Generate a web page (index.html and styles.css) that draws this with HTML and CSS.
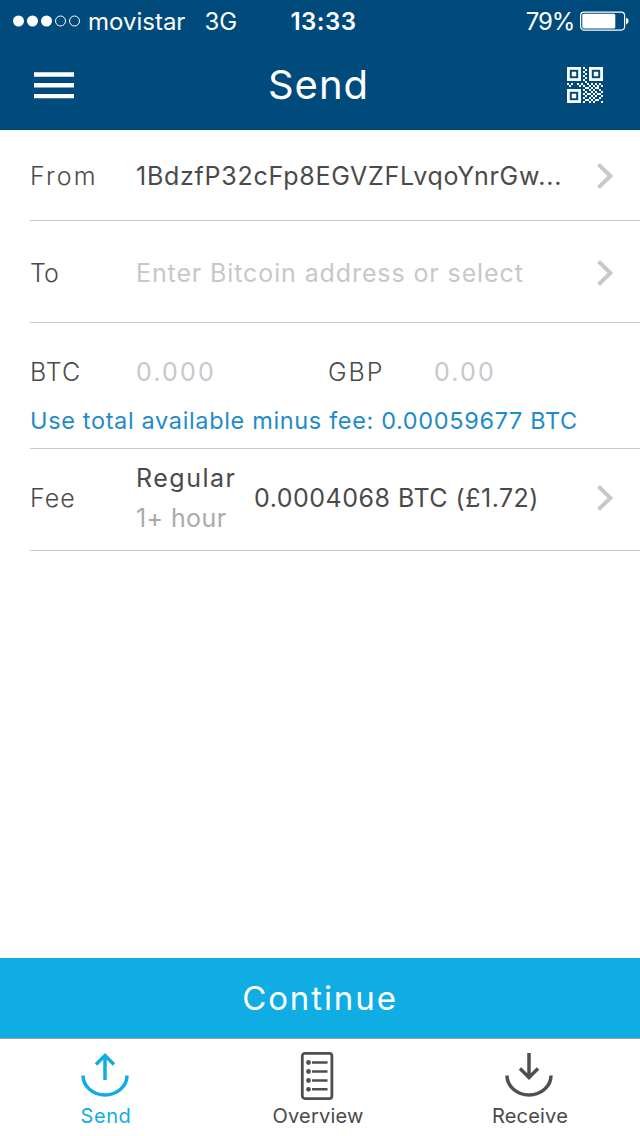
FILE: index.html
```
<!DOCTYPE html>
<html lang="en">
<head>
    <meta charset="UTF-8">
    <meta name="viewport" content="width=device-width, initial-scale=1.0">
    <title>Send</title>
    <link rel="stylesheet" href="styles.css">
</head>
<body>
    <header class="top">
        <div class="status-bar">
            <div class="carrier">
                <svg class="signal" width="68" height="12" viewBox="0 0 68 12">
                    <g fill="#fff"><circle cx="5.5" cy="6" r="5.5"/><circle cx="19.5" cy="6" r="5.5"/><circle cx="33.5" cy="6" r="5.5"/></g>
                    <g fill="none" stroke="#fff"><circle cx="47.5" cy="6" r="5"/><circle cx="61.5" cy="6" r="5"/></g>
                </svg>
                <span class="carrier-name">movistar</span>
                <span class="network">3G</span>
            </div>
            <div class="clock">13:33</div>
            <div class="power">
                <span class="percent">79%</span>
                <svg width="50" height="20" viewBox="0 0 50 20">
                    <rect x="1.6" y="1.1" width="44" height="18" rx="3.5" fill="none" stroke="#fff" stroke-width="1.2"/>
                    <rect x="3.3" y="2.8" width="33" height="14.6" rx="1.5" fill="#fff"/>
                    <path d="M47 6.800q2.600 .5 2.600 3.300t-2.600 3.300z" fill="#fff"/>
                </svg>
            </div>
        </div>
        <div class="nav-bar">
            <svg class="menu-icon" width="40" height="27" viewBox="0 0 40 27">
                <path d="M0 2.5h40M0 13.3h40M0 24.1h40" stroke="#fff" stroke-width="4.4"/>
            </svg>
            <h1 class="title">Send</h1>
            <svg class="qr-icon" width="36" height="36" viewBox="0 0 18 18">
                <g fill="none" stroke="#fff" stroke-width="1.4">
                    <rect x="0.7" y="0.7" width="5.6" height="5.6"/>
                    <rect x="11.7" y="0.7" width="5.6" height="5.6"/>
                    <rect x="0.7" y="11.7" width="5.6" height="5.6"/>
                </g>
                <path fill="#fff" d="M2.4 2.4h2.200v2.200h-2.200zM13.4 2.4h2.200v2.200h-2.200zM2.4 13.4h2.200v2.200h-2.200z"/>
                <g fill="none" stroke="#fff">
                    <path d="M8 .5h1M9 1.5h1M8 2.5h1M9 3.5h1M8 4.5h1M9 5.5h1M8 6.5h1M9 7.5h1"/>
                    <path d="M0 8.5h1M2 8.5h1M5 8.5h1M7 8.5h1M10 8.5h1M12 8.5h1M14 8.5h1M16 8.5h1M1 9.5h1M6 9.5h1M8 9.5h1M11 9.5h1M13 9.5h1M15 9.5h1M17 9.5h1"/>
                    <path d="M9 10.5h2M12 10.5h1M14 10.5h2M8 11.5h1M11 11.5h1M13 11.5h1M16 11.5h1M9 12.5h1M12 12.5h1M14 12.5h1M17 12.5h1M8 13.5h1M10 13.5h2M13 13.5h1M15 13.5h2"/>
                    <path d="M9 14.5h1M12 14.5h1M14 14.5h1M17 14.5h1M8 15.5h1M11 15.5h1M13 15.5h1M16 15.5h1M9 16.5h2M12 16.5h1M14 16.5h2M8 17.5h1M11 17.5h1M13 17.5h1M17 17.5h1"/>
                </g>
            </svg>
        </div>
    </header>

    <main class="form">
        <div class="row row-from">
            <span class="label">From</span>
            <span class="value address">1BdzfP32cFp8EGVZFLvqoYnrGw...</span>
            <svg class="chevron" width="16" height="26" viewBox="0 0 16 26"><path d="M1.5 1.5L13.5 13L1.5 24.5"/></svg>
        </div>
        <div class="row row-to">
            <span class="label">To</span>
            <span class="value placeholder">Enter Bitcoin address or select</span>
            <svg class="chevron" width="16" height="26" viewBox="0 0 16 26"><path d="M1.5 1.5L13.5 13L1.5 24.5"/></svg>
        </div>
        <div class="amount">
            <div class="amount-fields">
                <span class="label">BTC</span>
                <span class="placeholder number btc">0.000</span>
                <span class="label currency">GBP</span>
                <span class="placeholder number">0.00</span>
            </div>
            <a class="use-all">Use total available minus fee: 0.00059677 BTC</a>
        </div>
        <div class="row row-fee">
            <span class="label">Fee</span>
            <div class="fee-type">
                <span class="fee-name">Regular</span>
                <span class="fee-time">1+ hour</span>
            </div>
            <span class="value fee-value">0.0004068 BTC (£1.72)</span>
            <svg class="chevron" width="16" height="26" viewBox="0 0 16 26"><path d="M1.5 1.5L13.5 13L1.5 24.5"/></svg>
        </div>
    </main>

    <button class="continue">Continue</button>

    <nav class="tabs">
        <a class="tab tab-send active">
            <svg width="48" height="46" viewBox="0 0 48 46">
                <path d="M2 23.5a22 19.5 0 0 0 44 0M24 28V4M15 12.5l9-9 9 9"/>
            </svg>
            <span>Send</span>
        </a>
        <a class="tab tab-overview">
            <svg width="34" height="48" viewBox="0 0 34 48">
                <rect x="2.3" y="1.4" width="29.6" height="45.2" rx="2.5" stroke-width="2.8"/>
                <path d="M12 10.5h15.5M12 19.5h15.5M12 28.5h15.5M12 37.3h15.5" stroke-width="2.4"/>
                <g class="dots"><circle cx="8.5" cy="10.5" r="2.400"/><circle cx="8.5" cy="19.5" r="2.400"/><circle cx="8.5" cy="28.5" r="2.400"/><circle cx="8.5" cy="37.3" r="2.400"/></g>
            </svg>
            <span>Overview</span>
        </a>
        <a class="tab tab-receive">
            <svg width="48" height="46" viewBox="0 0 48 46">
                <path d="M2 23.5a22 19.5 0 0 0 44 0M24 1v24M15 16.5l9 9 9-9"/>
            </svg>
            <span>Receive</span>
        </a>
    </nav>
</body>
</html>
```
FILE: styles.css
```
* {
    box-sizing: border-box;
}

body {
    margin: 0;
    height: 1136px;
    display: flex;
    flex-direction: column;
    background: #fff;
    color: #4a4a4a;
    font-family: Inter, "Open Sans", sans-serif;
    font-size: 25px;
    white-space: nowrap;
    overflow: hidden;
}

svg {
    display: block;
    flex: none;
}

.top {
    height: 130px;
    background: #004a7c;
    color: #fff;
}

.status-bar {
    display: grid;
    grid-template-columns: 1fr auto 1fr;
    align-items: center;
    height: 40px;
    padding: 2px 11px 0 13px;
    font-size: 24px;
}

.carrier,
.power {
    display: flex;
    align-items: center;
}

.power {
    justify-content: flex-end;
    gap: 5px;
}

.percent {
    letter-spacing: -1.2px;
}

.carrier-name {
    margin-left: 7px;
}

.network {
    margin-left: 19px;
}

.clock {
    padding-left: 5px;
    font-weight: 600;
    letter-spacing: 0.5px;
}

.nav-bar {
    display: grid;
    grid-template-columns: 1fr auto 1fr;
    align-items: center;
    height: 90px;
    padding: 0 37px 0 34px;
}

.title {
    margin: 0;
    padding-bottom: 1px;
    font-size: 40px;
    font-weight: 400;
    letter-spacing: 1px;
}

.qr-icon {
    justify-self: end;
}

.form {
    flex: 1;
    padding-left: 30px;
}

.row {
    display: flex;
    align-items: center;
    height: 102px;
    padding-right: 27px;
    border-bottom: 1px solid #c8c7cc;
}

.row-from {
    height: 91px;
    padding-top: 2px;
}

.row-from .label {
    letter-spacing: 2.2px;
}

.row-to {
    padding-top: 3px;
}

.row-fee {
    padding-bottom: 4px;
}

.label {
    flex: none;
    width: 106px;
    font-weight: 300;
    letter-spacing: 1px;
}

.row-to .label {
    letter-spacing: 0;
}

.currency {
    letter-spacing: 2px;
}

.address {
    letter-spacing: 0.74px;
}

.placeholder {
    color: #c7c7cd;
    letter-spacing: 0.89px;
}

.number {
    letter-spacing: 2.2px;
}

.chevron {
    margin-left: auto;
    fill: none;
    stroke: #c7c7cc;
    stroke-width: 4;
}

.amount {
    height: 126px;
    padding-top: 33px;
    border-bottom: 1px solid #c8c7cc;
}

.amount-fields {
    display: flex;
    line-height: 32px;
}

.btc {
    width: 192px;
}

.use-all {
    display: block;
    margin-top: 18px;
    color: #1f8bc9;
    font-size: 23.5px;
    letter-spacing: 0.65px;
    line-height: 30px;
}

.fee-type {
    display: flex;
    flex-direction: column;
    width: 118px;
    line-height: 40px;
}

.fee-name {
    letter-spacing: 1.5px;
}

.fee-time {
    color: #aaa;
    letter-spacing: 0.4px;
}

.fee-value {
    letter-spacing: 0.5px;
}

.continue {
    height: 80px;
    border: 0;
    background: #10ade4;
    color: #fff;
    font-family: inherit;
    font-size: 33px;
    letter-spacing: 1.9px;
}

.tabs {
    display: flex;
    height: 98px;
    padding-top: 13px;
    border-top: 1px solid #a0a0a5;
    font-size: 20px;
}

.tab {
    display: flex;
    flex-direction: column;
    align-items: center;
    justify-content: space-between;
    width: 212px;
    height: 76px;
    letter-spacing: 0.2px;
}

.tab svg {
    margin-right: 2px;
    fill: none;
    stroke: #4f4f51;
    stroke-width: 3.5;
}

.tab .dots {
    fill: #4f4f51;
    stroke: none;
}

.active {
    color: #10ade4;
    letter-spacing: 0.6px;
}

.active svg {
    stroke: #10ade4;
}
```
